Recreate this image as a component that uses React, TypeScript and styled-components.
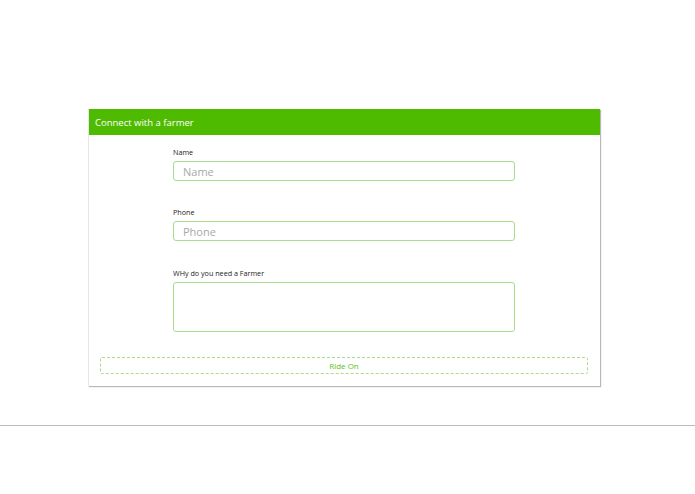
import React from 'react';
import styled, { createGlobalStyle } from 'styled-components';

const GlobalStyle = createGlobalStyle`
  html, body {
    margin: 0;
    padding: 0;
    background: #ffffff;
    font-family: "Open Sans", "Noto Sans", sans-serif;
  }
`;

const Page = styled.div`
  width: 695px;
  height: 494px;
  padding-top: 109px;
  box-sizing: border-box;
`;

const Card = styled.div`
  margin-left: 88px;
  width: 512px;
  background: #fff;
  border-left: 1px solid #e6e6e6;
  box-shadow: 1px 1px 1px rgba(0, 0, 0, 0.28);
  box-sizing: border-box;
`;

const Header = styled.div`
  height: 26px;
  background: #4fbb00;
  color: #fff;
  font-size: 9.5px;
  display: flex;
  align-items: center;
  padding-left: 6px;
`;

const Body = styled.div`
  padding: 12px 12px 12px 11px;
  display: flex;
  flex-direction: column;
`;

const Field = styled.div<{ $gap?: number }>`
  width: 342px;
  margin-left: 73px;
  display: flex;
  flex-direction: column;
  margin-bottom: ${(p) => p.$gap ?? 26}px;
`;

const Label = styled.label`
  font-size: 7.2px;
  line-height: 10px;
  height: 10px;
  color: #222;
  margin-bottom: 4px;
`;

const Input = styled.input`
  height: 20px;
  box-sizing: border-box;
  border: 1px solid #a9dc8e;
  border-radius: 3px;
  padding: 0 9px;
  font-family: inherit;
  font-size: 11px;
  color: #333;
  outline: none;
  &::placeholder {
    color: #a8a8a8;
  }
`;

const TextArea = styled.textarea`
  height: 50px;
  box-sizing: border-box;
  border: 1px solid #a9dc8e;
  border-radius: 3px;
  resize: none;
  outline: none;
  font-family: inherit;
`;

const Button = styled.button`
  height: 17px;
  box-sizing: border-box;
  border: 1px dashed #a9dc8e;
  border-radius: 2px;
  background: #fff;
  color: #5cc21c;
  font-family: inherit;
  font-size: 8px;
  cursor: pointer;
  padding: 0;
`;

const Divider = styled.hr`
  margin: 39px 0 0;
  border: none;
  border-top: 1px solid #bbbbbb;
`;

export default function App() {
  return (
    <>
      <GlobalStyle />
      <Page>
        <Card>
          <Header>Connect with a farmer</Header>
          <Body>
            <Field>
              <Label>Name</Label>
              <Input placeholder="Name" />
            </Field>
            <Field $gap={27}>
              <Label>Phone</Label>
              <Input placeholder="Phone" />
            </Field>
            <Field $gap={25}>
              <Label>WHy do you need a Farmer</Label>
              <TextArea />
            </Field>
            <Button type="button">Ride On</Button>
          </Body>
        </Card>
        <Divider />
      </Page>
    </>
  );
}
